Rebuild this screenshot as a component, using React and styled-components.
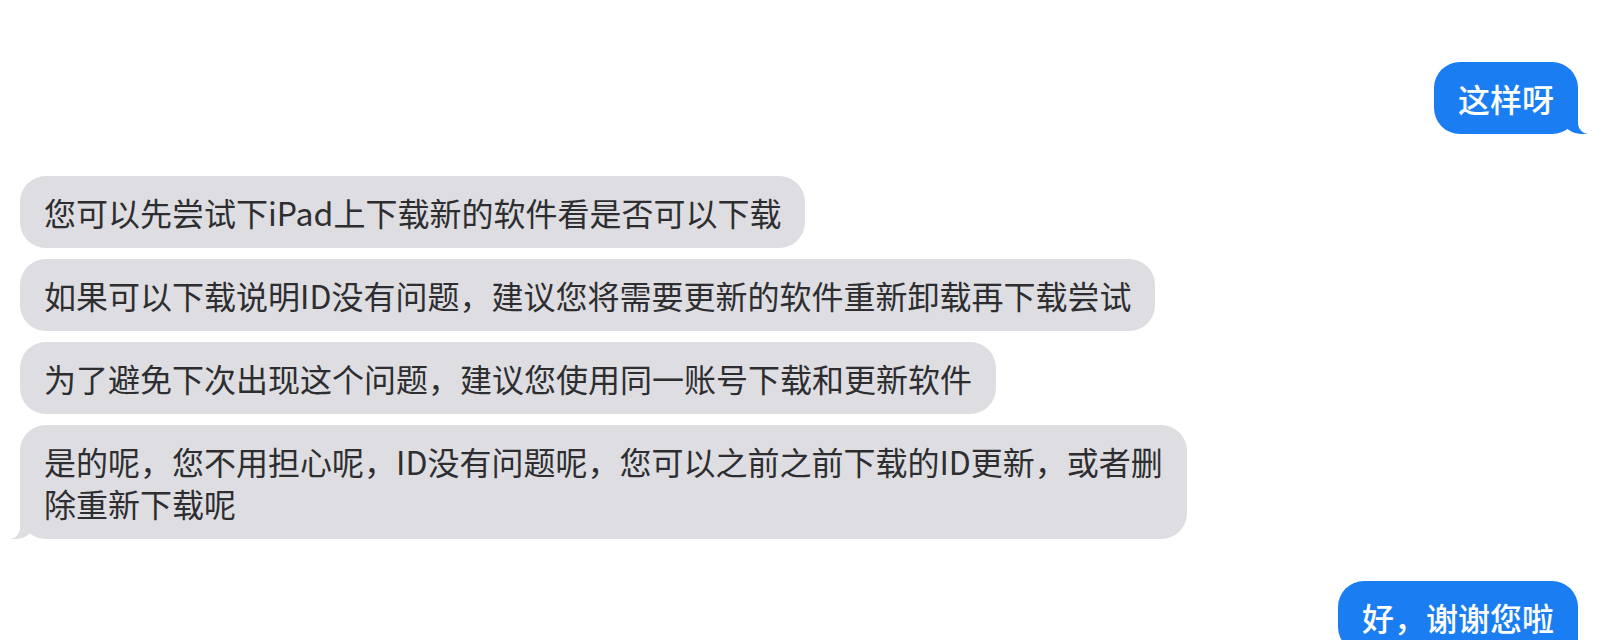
import React from "react";
import styled, { createGlobalStyle, css } from "styled-components";

const Global = createGlobalStyle`
  html, body { margin: 0; padding: 0; background: #ffffff; }
  body { font-family: "Noto Sans CJK SC", "Noto Sans", sans-serif; }
`;

const Page = styled.div`
  width: 1599px;
  height: 640px;
  overflow: hidden;
  box-sizing: border-box;
  padding: 62px 21px 0 20px;
  display: flex;
  flex-direction: column;
  gap: 42px;
`;

const Group = styled.div`
  display: flex;
  flex-direction: column;
  gap: 11px;
  align-items: ${(p) => (p.$mine ? "flex-end" : "flex-start")};
`;

const Bubble = styled.div`
  position: relative;
  box-sizing: border-box;
  max-width: 1167px;
  padding: 15px 24px 15px;
  border-radius: 26px;
  font-size: 32px;
  line-height: 42px;
  letter-spacing: 0;
  background: ${(p) => (p.$mine ? "#1a7ef2" : "#dddde2")};
  color: ${(p) => (p.$mine ? "#ffffff" : "#2e2e30")};
  font-weight: ${(p) => (p.$mine ? 500 : 400)};

  ${(p) =>
    p.$tail &&
    p.$mine &&
    css`
      &::before {
        content: "";
        position: absolute;
        bottom: 0;
        right: -11px;
        width: 26px;
        height: 28px;
        background: #1a7ef2;
        border-bottom-left-radius: 18px 15px;
      }
      &::after {
        content: "";
        position: absolute;
        bottom: 0;
        right: -28px;
        width: 28px;
        height: 29px;
        background: #ffffff;
        border-bottom-left-radius: 11px;
      }
    `}

  ${(p) =>
    p.$tail &&
    !p.$mine &&
    css`
      &::before {
        content: "";
        position: absolute;
        bottom: 0;
        left: -10px;
        width: 24px;
        height: 28px;
        background: #dddde2;
        border-bottom-right-radius: 18px 15px;
      }
      &::after {
        content: "";
        position: absolute;
        bottom: 0;
        left: -28px;
        width: 28px;
        height: 29px;
        background: #ffffff;
        border-bottom-right-radius: 11px;
      }
    `}
`;

const Text = styled.span`
  position: relative;
  z-index: 1;
`;

const groups = [
  { mine: true, items: ["这样呀"] },
  {
    mine: false,
    items: [
      "您可以先尝试下iPad上下载新的软件看是否可以下载",
      "如果可以下载说明ID没有问题，建议您将需要更新的软件重新卸载再下载尝试",
      "为了避免下次出现这个问题，建议您使用同一账号下载和更新软件",
      "是的呢，您不用担心呢，ID没有问题呢，您可以之前之前下载的ID更新，或者删除重新下载呢",
    ],
  },
  { mine: true, items: ["好，谢谢您啦"] },
];

export default function App() {
  return (
    <>
      <Global />
      <Page>
        {groups.map((g, gi) => (
          <Group key={gi} $mine={g.mine}>
            {g.items.map((t, i) => (
              <Bubble key={i} $mine={g.mine} $tail={i === g.items.length - 1}>
                <Text>{t}</Text>
              </Bubble>
            ))}
          </Group>
        ))}
      </Page>
    </>
  );
}
